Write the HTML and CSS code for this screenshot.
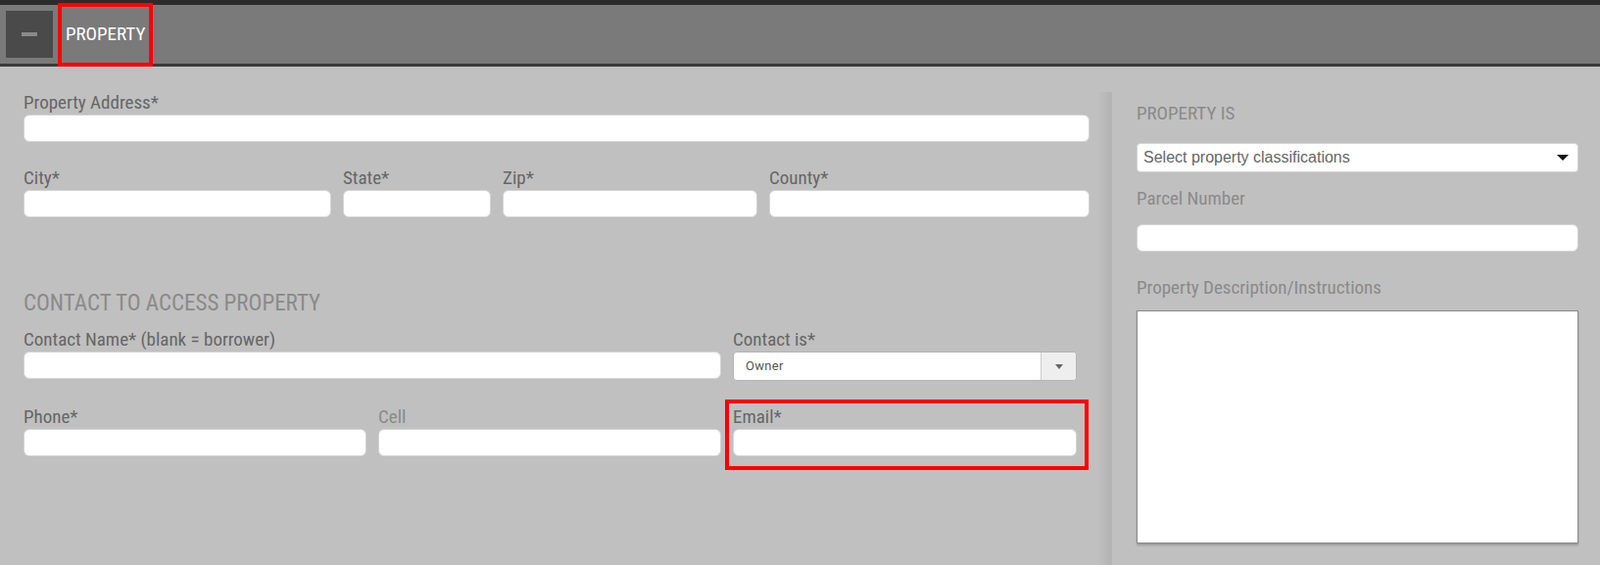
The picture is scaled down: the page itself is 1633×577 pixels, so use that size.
FILE: index.html
```html
<!DOCTYPE html>
<html>
<head>
    <title>Property</title>
    <link rel="stylesheet" href="styles.css">
</head>
<body>
    <div class="topStrip"></div>
    <div class="panelHeader">
        <button class="collapseButton"><span class="minusBar"></span></button>
        <span class="panelTitle highlighted">PROPERTY</span>
    </div>

    <div class="panelBody">
        <div class="sectionMain">
            <div class="fieldRow rowAddress">
                <div class="field">
                    <label class="fieldLabel">Property Address*</label>
                    <input class="textInput" type="text">
                </div>
            </div>

            <div class="fieldRow rowCity">
                <div class="field">
                    <label class="fieldLabel">City*</label>
                    <input class="textInput" type="text">
                </div>
                <div class="field">
                    <label class="fieldLabel">State*</label>
                    <input class="textInput" type="text">
                </div>
                <div class="field">
                    <label class="fieldLabel">Zip*</label>
                    <input class="textInput" type="text">
                </div>
                <div class="field">
                    <label class="fieldLabel">County*</label>
                    <input class="textInput" type="text">
                </div>
            </div>

            <h3 class="sectionHeading">CONTACT TO ACCESS PROPERTY</h3>

            <div class="fieldRow rowContact">
                <div class="field spanTwo">
                    <label class="fieldLabel">Contact Name* (blank = borrower)</label>
                    <input class="textInput" type="text">
                </div>
                <div class="field">
                    <label class="fieldLabel">Contact is*</label>
                    <div class="comboBox">
                        <span class="comboValue">Owner</span>
                        <span class="comboArrow"><span class="caret small"></span></span>
                    </div>
                </div>
            </div>

            <div class="fieldRow rowPhone">
                <div class="field">
                    <label class="fieldLabel">Phone*</label>
                    <input class="textInput" type="text">
                </div>
                <div class="field">
                    <label class="fieldLabel muted">Cell</label>
                    <input class="textInput" type="text">
                </div>
                <div class="field highlighted">
                    <label class="fieldLabel">Email*</label>
                    <input class="textInput" type="text">
                </div>
            </div>
        </div>

        <div class="sideDivider"></div>

        <div class="sectionSide">
            <div class="sideTitle">PROPERTY IS</div>
            <div class="multiSelect">
                <span class="multiPlaceholder">Select property classifications</span>
                <span class="caret"></span>
            </div>

            <label class="fieldLabel muted parcelLabel">Parcel Number</label>
            <input class="textInput parcelInput" type="text">

            <label class="fieldLabel muted descLabel">Property Description/Instructions</label>
            <textarea class="descBox"></textarea>
        </div>
    </div>
</body>
</html>
```

FILE: styles.css
```css
body {
    margin: 0;
    background-color: #c0c0c0;
    font-family: "Roboto Condensed", Roboto, sans-serif;
    font-stretch: condensed;
    overflow: hidden;
}
.topStrip {
    height: 5px;
    background-color: #2b2b2b;
}
.panelHeader {
    height: 60px;
    background-color: #7a7a7a;
    border-bottom: 3px solid #3a3a3a;
    display: flex;
    align-items: center;
    padding-left: 6px;
}
.collapseButton {
    width: 48px;
    height: 48px;
    background-color: #4a4a4a;
    border: none;
    padding: 0;
    display: flex;
    align-items: center;
    justify-content: center;
}
.minusBar {
    width: 16px;
    height: 4px;
    background-color: #8a8a8a;
}
.panelTitle {
    margin-left: 13px;
    color: #ffffff;
    font-size: 19px;
    line-height: 22px;
}
.highlighted {
    position: relative;
}
.panelTitle.highlighted::after {
    content: "";
    position: absolute;
    left: -8px;
    right: -8px;
    top: -21px;
    bottom: -22px;
    border: 4px solid #ff0000;
}
.field.highlighted::after {
    content: "";
    position: absolute;
    left: -8px;
    right: -12px;
    top: -7px;
    bottom: -14px;
    border: 4px solid #ff0000;
}

.panelBody {
    display: flex;
    height: 509px;
}
.sectionMain {
    width: 1088px;
    margin-left: 24px;
    padding-top: 26px;
}
.fieldRow {
    display: grid;
    column-gap: 12px;
    margin-top: 26px;
}
.rowAddress {
    margin-top: 0;
    grid-template-columns: 1fr;
}
.rowCity {
    grid-template-columns: 314px 151px 260px 1fr;
}
.rowContact,
.rowPhone {
    width: 1075px;
    grid-template-columns: 350px 350px 1fr;
}
.rowContact {
    margin-top: 13px;
}
.spanTwo {
    grid-column: span 2;
}
.field {
    display: flex;
    flex-direction: column;
}
.fieldLabel {
    display: block;
    font-size: 19px;
    line-height: 22px;
    color: #666666;
    margin-bottom: 1px;
}
.fieldLabel.muted {
    color: #8a8a8a;
}
.textInput {
    box-sizing: border-box;
    height: 28px;
    width: 100%;
    margin: 0;
    background-color: #ffffff;
    border: 1px solid #d4d4d4;
    border-radius: 6px;
    outline: none;
}
.sectionHeading {
    margin: 74px 0 0 0;
    font-weight: normal;
    font-size: 23px;
    line-height: 27px;
    color: #8a8a8a;
}

.comboBox {
    box-sizing: border-box;
    height: 30px;
    display: flex;
    background-color: #ffffff;
    border: 1px solid #b4b4b4;
    border-radius: 4px;
    overflow: hidden;
}
.comboValue {
    flex: 1;
    padding-left: 12px;
    font-family: Roboto, sans-serif;
    font-stretch: normal;
    font-size: 13px;
    line-height: 28px;
    color: #555555;
    letter-spacing: 0.3px;
}
.comboArrow {
    width: 35px;
    background-color: #eeeeee;
    border-left: 1px solid #cccccc;
    display: flex;
    align-items: center;
    justify-content: center;
}
.caret {
    width: 0;
    height: 0;
    border-left: 6px solid transparent;
    border-right: 6px solid transparent;
    border-top: 6px solid #111111;
}
.caret.small {
    border-left-width: 4px;
    border-right-width: 4px;
    border-top: 5px solid #666666;
}

.sideDivider {
    width: 14px;
    margin-left: 8px;
    margin-top: 26px;
    background: linear-gradient(to right, rgba(0, 0, 0, 0), rgba(0, 0, 0, 0.07));
    border-right: 1px solid #b6b6b6;
}
.sectionSide {
    flex: 1;
    margin-top: 26px;
    padding: 11px 22px 0 25px;
    display: flex;
    flex-direction: column;
}
.sideTitle {
    font-size: 19px;
    line-height: 22px;
    color: #8a8a8a;
}
.multiSelect {
    box-sizing: border-box;
    height: 30px;
    margin-top: 19px;
    padding: 0 9px 0 6px;
    background-color: #ffffff;
    border: 1px solid #d4d4d4;
    border-radius: 4px;
    display: flex;
    align-items: center;
    justify-content: space-between;
}
.multiPlaceholder {
    font-family: "Liberation Sans", Arial, sans-serif;
    font-stretch: normal;
    font-size: 16px;
    color: #666666;
}
.parcelLabel {
    margin-top: 16px;
    margin-bottom: 15px;
}
.parcelInput {
    flex: none;
}
.descLabel {
    margin-top: 26px;
    margin-bottom: 12px;
}
.descBox {
    box-sizing: border-box;
    height: 238px;
    width: 100%;
    margin: 0;
    border: 1px solid #8a8a8a;
    border-radius: 0;
    background-color: #ffffff;
    box-shadow: 0 2px 2px rgba(0, 0, 0, 0.2);
    resize: none;
    outline: none;
}
```
